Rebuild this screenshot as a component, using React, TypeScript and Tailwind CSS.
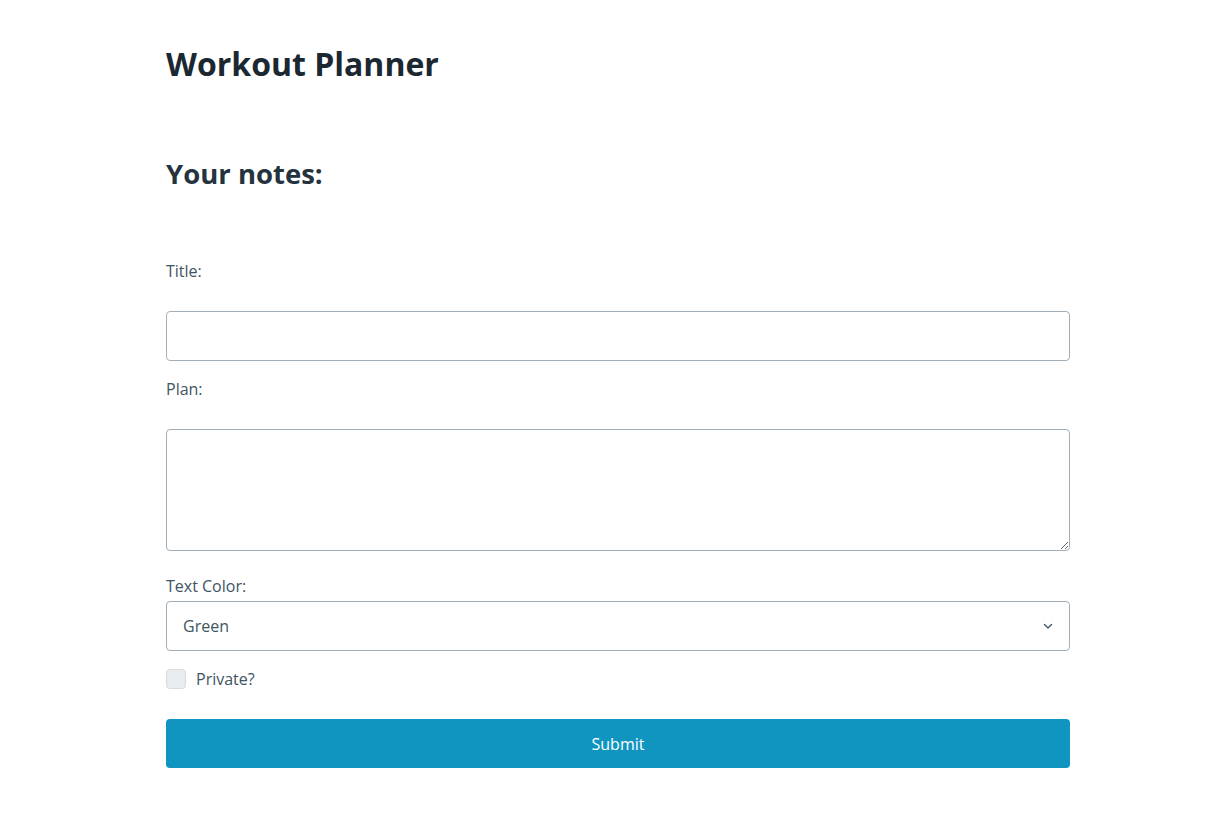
import { useState } from 'react';

export default function App() {
  const [title, setTitle] = useState('');
  const [plan, setPlan] = useState('');
  const [color, setColor] = useState('Green');
  const [isPrivate, setIsPrivate] = useState(false);

  return (
    <div
      className="min-h-screen bg-white text-[#415462]"
      style={{ fontFamily: '"Open Sans", "Noto Sans", sans-serif' }}
    >
      <main className="ml-[166px] w-[904px] pt-[44px]">
        <h1 className="h-[40px] text-[32px] leading-[40px] font-bold text-[#1b2832]">
          Workout Planner
        </h1>
        <h2 className="mt-[72px] h-[36px] text-[27.5px] leading-[36px] font-bold text-[#24333e]">
          Your notes:
        </h2>

        <form className="mt-[67px] flex flex-col" onSubmit={(e) => e.preventDefault()}>
          <label htmlFor="title" className="text-base leading-6">
            Title:
          </label>
          <input
            id="title"
            value={title}
            onChange={(e) => setTitle(e.target.value)}
            className="mt-[28px] h-[50px] w-full rounded-[4px] border border-[#a2afb9] bg-white px-4 text-base text-[#415462] outline-none"
          />

          <label htmlFor="plan" className="mt-[16px] text-base leading-6">
            Plan:
          </label>
          <textarea
            id="plan"
            value={plan}
            onChange={(e) => setPlan(e.target.value)}
            className="mt-[28px] h-[122px] w-full rounded-[4px] border border-[#a2afb9] bg-white px-4 py-3 text-base text-[#415462] outline-none"
          />

          <label htmlFor="color" className="mt-[23px] text-base leading-6">
            Text Color:
          </label>
          <div className="relative mt-[3px]">
            <select
              id="color"
              value={color}
              onChange={(e) => setColor(e.target.value)}
              className="h-[50px] w-full appearance-none rounded-[4px] border border-[#a2afb9] bg-white pl-4 pr-10 text-base text-[#415462] outline-none"
            >
              <option>Green</option>
              <option>Blue</option>
              <option>Red</option>
            </select>
            <svg
              className="pointer-events-none absolute right-[16px] top-[19px]"
              width="12"
              height="12"
              viewBox="0 0 24 24"
              fill="none"
              stroke="#415462"
              strokeWidth="2.5"
              strokeLinecap="round"
              strokeLinejoin="round"
            >
              <polyline points="5 9 12 16 19 9" />
            </svg>
          </div>

          <label className="mt-[18px] flex h-[20px] cursor-pointer items-center gap-[10px] text-base leading-5">
            <input
              type="checkbox"
              checked={isPrivate}
              onChange={(e) => setIsPrivate(e.target.checked)}
              className="h-[20px] w-[20px] appearance-none rounded-[4px] border border-[#d5dce2] bg-[#e9ecef] checked:border-[#1095c1] checked:bg-[#1095c1]"
            />
            Private?
          </label>

          <button
            type="submit"
            className="mt-[30px] h-[49px] w-full rounded-[4px] bg-[#1095c1] text-base text-white"
          >
            Submit
          </button>
        </form>
      </main>
    </div>
  );
}
